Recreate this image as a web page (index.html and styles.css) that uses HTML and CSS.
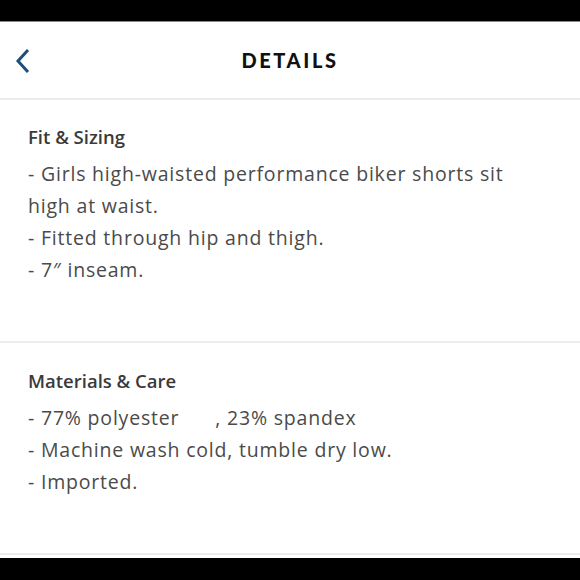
FILE: index.html
```html
<!DOCTYPE html>
<html>
<head>
<meta charset="utf-8">
<link rel="stylesheet" href="styles.css">
</head>
<body>
<div class="statusbar"></div>
<header class="topbar">
  <span class="back" aria-label="Back">
    <svg width="16" height="26" viewBox="0 0 16 26"><path d="M13 2 L3 13 L13 24" fill="none" stroke="#1d4f7c" stroke-width="3"/></svg>
  </span>
  <h1 class="title">DETAILS</h1>
</header>
<section class="section">
  <h2 class="section-title">Fit &amp; Sizing</h2>
  <div class="section-body">
    <p>- Girls high-waisted performance biker shorts sit high at waist.</p>
    <p>- Fitted through hip and thigh.</p>
    <p>- 7″ inseam.</p>
  </div>
</section>
<section class="section">
  <h2 class="section-title">Materials &amp; Care</h2>
  <div class="section-body">
    <p>- 77% polyester<span class="blank"></span>, 23% spandex</p>
    <p>- Machine wash cold, tumble dry low.</p>
    <p>- Imported.</p>
  </div>
</section>
<div class="gap"></div>
<div class="bottombar"></div>
</body>
</html>
```
FILE: styles.css
```css
* { box-sizing: border-box; }
html, body { margin: 0; padding: 0; background: #fff; }
body {
  width: 580px;
  height: 580px;
  overflow: hidden;
  display: flex;
  flex-direction: column;
  font-family: "Open Sans", "Liberation Sans", sans-serif;
}
.statusbar {
  height: 22px;
  background: #000;
  border-bottom: 1px solid #8a8a8a;
}
.topbar {
  height: 78px;
  border-bottom: 2px solid #ececec;
  display: flex;
  align-items: center;
  justify-content: center;
  position: relative;
}
.back {
  position: absolute;
  left: 15px;
  top: 26px;
  display: flex;
}
.title {
  margin: 0;
  font-family: "Lato", "Open Sans", sans-serif;
  font-size: 20px;
  font-weight: 900;
  letter-spacing: 2.6px;
  color: #111;
}
.section {
  padding: 21px 28px 55px;
  border-bottom: 2px solid #ececec;
}
.section + .section { padding-top: 22px; }
.section-title {
  margin: 0 0 5px;
  font-size: 18.5px;
  line-height: 32px;
  font-weight: 600;
  color: #3a3a3a;
}
.section-body p {
  margin: 0;
  font-size: 19.5px;
  line-height: 32px;
  color: #4a4a4a;
  letter-spacing: 0.8px;
  max-width: 490px;
}
.blank {
  display: inline-block;
  width: 36px;
}
.gap { height: 3px; }
.bottombar { flex: 1; background: #000; }
```
